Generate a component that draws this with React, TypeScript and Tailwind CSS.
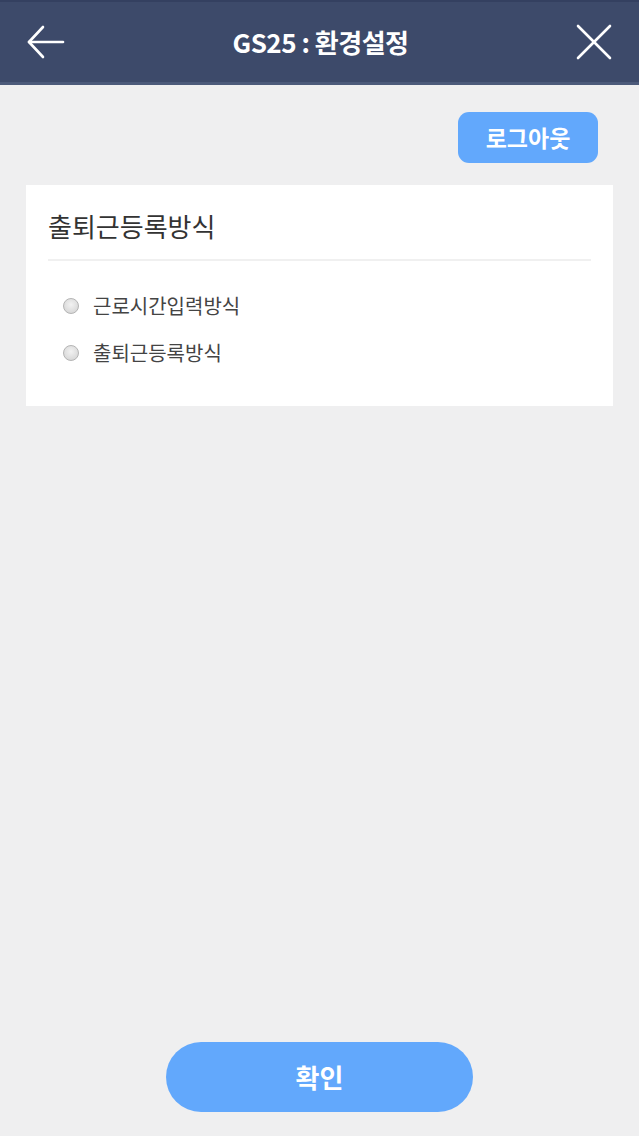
import React from "react";

export default function App() {
  const font = { fontFamily: '"Noto Sans CJK KR", "Noto Sans", sans-serif' };
  return (
    <div className="w-[639px] h-[1136px] bg-[#efeff0] flex flex-col" style={font}>
      <div className="h-[85px] bg-[#3d4a6a] border-t-[2px] border-t-[#344060] border-b-[3px] border-b-[#4c5a7a] flex items-center justify-between px-[26px] shrink-0">
        <svg width="40" height="36" viewBox="0 0 40 36" fill="none" stroke="#ffffff" strokeWidth="2.6" strokeLinecap="round" strokeLinejoin="round">
          <path d="M3 18 H37" />
          <path d="M17 3 L3 18 L17 33" />
        </svg>
        <div className="text-white text-[26px] font-bold tracking-[-0.5px] leading-none">GS25 : 환경설정</div>
        <svg width="38" height="38" viewBox="0 0 38 38" fill="none" stroke="#ffffff" strokeWidth="2.6" strokeLinecap="round">
          <path d="M3 3 L35 35" />
          <path d="M35 3 L3 35" />
        </svg>
      </div>
      <div className="flex justify-end pr-[41px] pt-[27px]">
        <button className="w-[140px] h-[51px] rounded-[11px] bg-[#62a8fc] text-white text-[23px] font-bold leading-none">로그아웃</button>
      </div>
      <div className="mx-[26px] mt-[22px] bg-white px-[22px] pt-[22px] pb-[41px]">
        <div className="text-[26px] text-[#333] leading-none pb-[20px] border-b-[2px] border-[#f0f0f0] pt-[6px]">출퇴근등록방식</div>
        <div className="flex flex-col gap-[22px] pt-[32px] pl-[15px]">
          {["근로시간입력방식", "출퇴근등록방식"].map((t) => (
            <label key={t} className="flex items-center gap-[14px] h-[25px]">
              <span className="w-[16px] h-[16px] rounded-full border border-[#b4b4b4] bg-[radial-gradient(circle_at_50%_40%,#f2f2f2,#d0d0d0)]" />
              <span className="text-[20px] text-[#444] leading-none">{t}</span>
            </label>
          ))}
        </div>
      </div>
      <div className="flex-1" />
      <div className="flex justify-center pb-[24px]">
        <button className="w-[307px] h-[70px] rounded-full bg-[#62a8fc] text-white text-[26px] font-bold leading-none">확인</button>
      </div>
    </div>
  );
}
